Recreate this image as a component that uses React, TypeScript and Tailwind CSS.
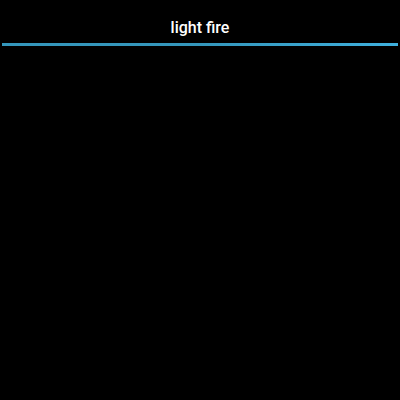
export default function App() {
  return (
    <div className="w-[400px] h-[400px] bg-black overflow-hidden" style={{ fontFamily: 'Roboto, "Noto Sans", sans-serif' }}>
      <div className="h-[43px] flex items-center justify-center pt-[13px]">
        <span className="text-white text-[16px] font-medium leading-none">light fire</span>
      </div>
      <div className="mx-[2px] h-[3px] bg-gradient-to-r from-[#3496bb] via-[#3496bb] to-[#3fb0de]" />
    </div>
  )
}
